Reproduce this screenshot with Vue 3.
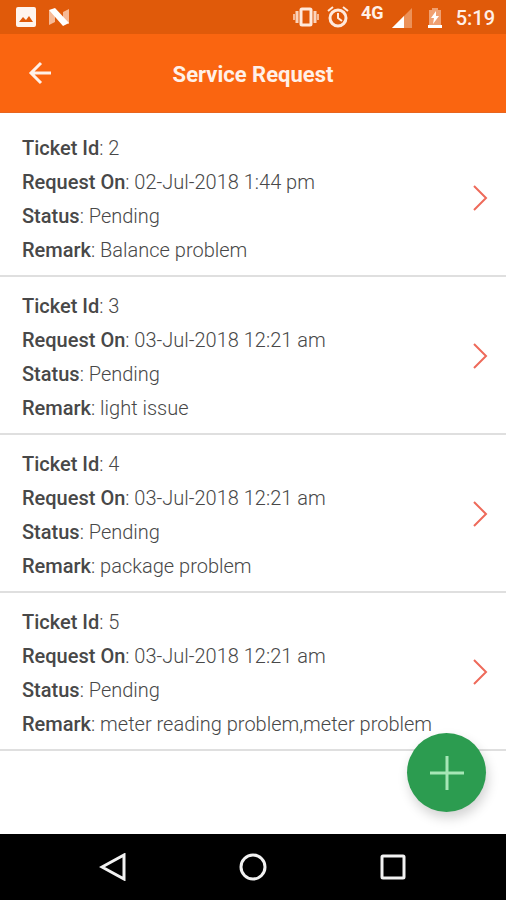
<template>
  <div class="screen">
    <div class="status-bar">
      <div class="status-group">
        <svg class="icon-image" width="20" height="20" viewBox="0 0 20 20">
          <path fill="#fff4ee" fill-rule="evenodd" d="M2 0h16a2 2 0 0 1 2 2v16a2 2 0 0 1-2 2H2a2 2 0 0 1-2-2V2a2 2 0 0 1 2-2zM3 15h14l-4-6-3 4-3-3z" />
        </svg>
        <svg width="22" height="18" viewBox="0 0 22 18">
          <path fill="#f6b995" d="M1 2l6 3v9l-6 3zM15 4l6-3v15l-6-3z" />
          <path fill="#fff" d="M1 2l6-2 14 15-6 3z" />
        </svg>
      </div>
      <div class="status-group right">
        <svg width="26" height="20" viewBox="0 0 26 20">
          <rect x="8" y="2" width="10" height="16" rx="1" fill="none" stroke="#ffe9dc" stroke-width="3" />
          <path d="M4 4v12M22 4v12" fill="none" stroke="#fbd3bb" stroke-width="3" />
          <path d="M1 7v6M25 7v6" fill="none" stroke="#f6b995" stroke-width="2" />
        </svg>
        <svg class="icon-alarm" width="22" height="22" viewBox="0 0 22 22">
          <g fill="none" stroke="#ffe9dc" stroke-width="2">
            <circle cx="11" cy="12" r="8" stroke-width="3" />
            <path d="M11 7v5l4 3M1 5l5-4M21 5l-5-4" />
          </g>
        </svg>
        <span class="network">4G</span>
        <svg class="icon-signal" width="20" height="20" viewBox="0 0 20 20">
          <path fill="#ec9158" d="M20 0v20H0z" />
          <path fill="#fff" d="M12 8v12H0z" />
        </svg>
        <svg class="icon-battery" width="14" height="20" viewBox="0 0 14 20">
          <path fill="#f0a071" d="M4 0h6v2h3v15H1V2h3z" />
          <path fill="#fff" d="M0 17h14v3H0zM8 3l-5 7h3l-1 6 6-8H8z" />
        </svg>
        <span class="clock">5:19</span>
      </div>
    </div>

    <header class="header">
      <button class="back-button" aria-label="Back">
        <svg width="24" height="24" viewBox="0 0 24 24">
          <path d="M13 2L3 12l10 10M3 12h20" fill="none" stroke="#fff0e8" stroke-width="3" />
        </svg>
      </button>
      <h1 class="title">Service Request</h1>
    </header>

    <main class="content">
      <ul class="ticket-list">
        <li v-for="ticket in tickets" :key="ticket.id">
          <a class="ticket" href="#" @click.prevent>
            <div class="details">
              <p><b>Ticket Id</b>: {{ ticket.id }}</p>
              <p><b>Request On</b>: {{ ticket.requestOn }}</p>
              <p><b>Status</b>: {{ ticket.status }}</p>
              <p><b>Remark</b>: {{ ticket.remark }}</p>
            </div>
            <svg class="chevron" width="16" height="28" viewBox="0 0 16 28">
              <path d="M2 1l12 12L2 25" fill="none" stroke="#ee6a5a" stroke-width="2" />
            </svg>
          </a>
        </li>
      </ul>
      <button class="add-button" aria-label="Add request">
        <svg width="34" height="34" viewBox="0 0 34 34">
          <path d="M17 0v34M0 17h34" stroke="#a6e6b6" stroke-width="3" />
        </svg>
      </button>
    </main>

    <nav class="nav-bar">
      <button aria-label="Back">
        <svg width="28" height="28" viewBox="0 0 28 28">
          <path d="M25 2v24L3 14z" />
        </svg>
      </button>
      <button aria-label="Home">
        <svg width="28" height="28" viewBox="0 0 28 28">
          <circle cx="14" cy="14" r="12" />
        </svg>
      </button>
      <button aria-label="Recent apps">
        <svg width="28" height="28" viewBox="0 0 28 28">
          <rect x="3" y="3" width="22" height="22" rx="1" />
        </svg>
      </button>
    </nav>
  </div>
</template>

<script setup>
import { ref } from "vue";

const tickets = ref([
  { id: 2, requestOn: "02-Jul-2018 1:44 pm", status: "Pending", remark: "Balance problem" },
  { id: 3, requestOn: "03-Jul-2018 12:21 am", status: "Pending", remark: "light issue" },
  { id: 4, requestOn: "03-Jul-2018 12:21 am", status: "Pending", remark: "package problem" },
  { id: 5, requestOn: "03-Jul-2018 12:21 am", status: "Pending", remark: "meter reading problem,meter problem" },
]);
</script>

<style>
body {
  margin: 0;
}
</style>

<style scoped>
.screen {
  min-height: 100vh;
  display: flex;
  flex-direction: column;
  background: #fff;
  font-family: Roboto, "Liberation Sans", sans-serif;
}

button {
  display: flex;
  align-items: center;
  justify-content: center;
  padding: 0;
  border: none;
  background: none;
  cursor: pointer;
}

.status-bar {
  display: flex;
  justify-content: space-between;
  height: 34px;
  padding: 0 11px 0 16px;
  background: #e05a0a;
  color: #fff0e8;
}

.status-group {
  display: flex;
  align-items: center;
  gap: 12px;
}

.right {
  gap: 8px;
}

.network {
  align-self: flex-start;
  margin-left: 4px;
  font-size: 18px;
  font-weight: 700;
  line-height: 26px;
}

.icon-signal {
  margin-top: 2px;
}

.icon-battery {
  margin: 2px 6px 0 8px;
}

.clock {
  font-size: 20px;
  font-weight: 500;
  line-height: 36px;
  padding-top: 2px;
}

.header {
  display: grid;
  grid-template-columns: 80px 1fr 80px;
  align-items: center;
  height: 78px;
  background: #fa6510;
  border-bottom: 1px solid #e8651e;
}

.back-button {
  height: 48px;
}

.title {
  margin: 0;
  padding-top: 4px;
  color: #fff0e8;
  font-size: 22px;
  font-weight: 700;
  line-height: 30px;
  text-align: center;
}

.content {
  position: relative;
  flex: 1;
}

.ticket-list {
  margin: 0;
  padding: 6px 0 0;
  list-style: none;
}

.ticket {
  display: flex;
  align-items: center;
  justify-content: space-between;
  padding: 12px 18px 8px 22px;
  border-bottom: 2px solid #dfdfdf;
  color: #484848;
  text-decoration: none;
}

.details p {
  margin: 0;
  font-size: 20px;
  font-weight: 300;
  line-height: 34px;
}

.details b {
  font-weight: 500;
}

.chevron {
  flex-shrink: 0;
}

/* floats over the end of the list */
.add-button {
  position: absolute;
  right: 20px;
  bottom: 22px;
  width: 79px;
  height: 79px;
  border-radius: 50%;
  background: #2c9c50;
  box-shadow: 2px 6px 12px rgba(0, 0, 0, 0.18);
}

.nav-bar {
  display: flex;
  justify-content: center;
  gap: 92px;
  height: 66px;
  background: #000;
}

.nav-bar button {
  width: 48px;
}

.nav-bar svg {
  fill: none;
  stroke: #f2f2f2;
  stroke-width: 3;
}
</style>
